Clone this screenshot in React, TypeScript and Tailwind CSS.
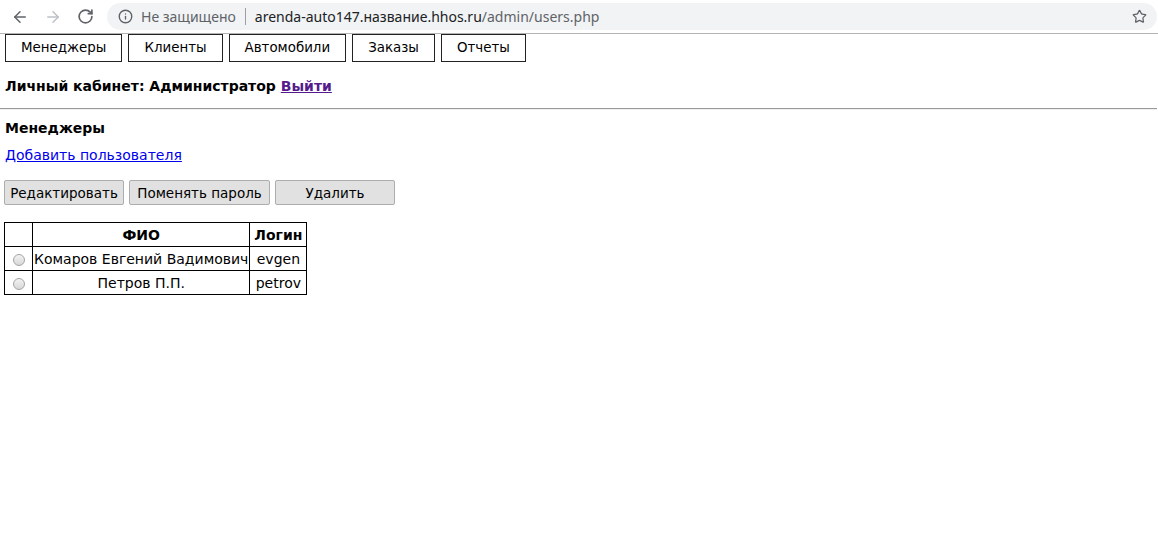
import { ArrowLeft, ArrowRight, RotateCw, Info, Star } from 'lucide-react';

const navItems = ['Менеджеры', 'Клиенты', 'Автомобили', 'Заказы', 'Отчеты'];

const users = [
  { name: 'Комаров Евгений Вадимович', login: 'evgen' },
  { name: 'Петров П.П.', login: 'petrov' },
];

function BrowserBar() {
  return (
    <div className="flex items-center h-[34px] border-b border-[#b4b4b4] bg-white font-['Noto_Sans',sans-serif]">
      <div className="flex items-center w-[107px] shrink-0 pl-[11px] gap-[15px]">
        <ArrowLeft className="w-[18px] h-[18px] text-[#5f6368]" strokeWidth={2} />
        <ArrowRight className="w-[18px] h-[18px] text-[#bdc1c6]" strokeWidth={2} />
        <RotateCw className="w-[17px] h-[17px] text-[#5f6368]" strokeWidth={2.4} />
      </div>
      <div className="flex items-center flex-1 h-[27px] mr-[1px] rounded-full bg-[#f1f3f4] pl-[11px] pr-[10px] text-[14px]">
        <Info className="w-[15px] h-[15px] text-[#5f6368]" strokeWidth={2.2} />
        <span className="ml-[8px] text-[#5f6368]">Не защищено</span>
        <span className="mx-[9px] h-[17px] w-px bg-[#9aa0a6]" />
        <span className="text-[#202124]">arenda-auto147.название.hhos.ru</span>
        <span className="text-[#5f6368]">/admin/users.php</span>
        <Star className="ml-auto w-[15px] h-[15px] text-[#5f6368]" strokeWidth={2} />
      </div>
    </div>
  );
}

export default function App() {
  return (
    <div className="min-h-[555px] bg-white text-black font-['DejaVu_Sans',Verdana,sans-serif] text-[14px] leading-[18px]">
      <BrowserBar />

      {/* Navigation */}
      <div className="flex gap-[6px] pl-[5px] text-[13.4px]">
        {navItems.map((item) => (
          <div
            key={item}
            className="h-[28px] flex items-center px-[15px] border border-[#222]"
          >
            {item}
          </div>
        ))}
      </div>

      <div className="pl-[5px] mt-[15px] font-bold">
        Личный кабинет: Администратор{' '}
        <a href="#" className="underline text-[#551a8b]">Выйти</a>
      </div>

      <div className="mt-[13px] h-[2px] border-t border-[#9a9a9a] border-b border-b-[#eeeeee] mr-[1px]" />

      <div className="pl-[5px] pt-[9px]">
        <div className="font-bold">Менеджеры</div>
        <a href="#" className="block mt-[9px] underline text-[#0000ee]">Добавить пользователя</a>

        <div className="flex gap-[5px] mt-[16px] -ml-[1px] text-[13.5px]">
          <button className="h-[25px] w-[120px] border border-[#adadad] rounded-[2px] bg-[#e1e1e1]">Редактировать</button>
          <button className="h-[25px] w-[141px] border border-[#adadad] rounded-[2px] bg-[#e1e1e1]">Поменять пароль</button>
          <button className="h-[25px] w-[120px] border border-[#adadad] rounded-[2px] bg-[#e1e1e1]">Удалить</button>
        </div>

        <table className="mt-[17px] -ml-[1px] border-collapse border border-black">
          <thead>
            <tr className="h-[24px]">
              <th className="w-[28px] border border-black"></th>
              <th className="border border-black px-[1px] font-bold">ФИО</th>
              <th className="border border-black px-[1px] font-bold">Логин</th>
            </tr>
          </thead>
          <tbody>
            {users.map((u) => (
              <tr key={u.login} className="h-[24px]">
                <td className="border border-black text-center">
                  <span className="inline-block w-[12px] h-[12px] rounded-full border border-[#a6a6a6] bg-gradient-to-b from-[#f2f2f2] to-[#d8d8d8] align-middle" />
                </td>
                <td className="border border-black px-[1px] text-center">{u.name}</td>
                <td className="border border-black w-[57px] px-[2px] text-center">{u.login}</td>
              </tr>
            ))}
          </tbody>
        </table>
      </div>
    </div>
  );
}
